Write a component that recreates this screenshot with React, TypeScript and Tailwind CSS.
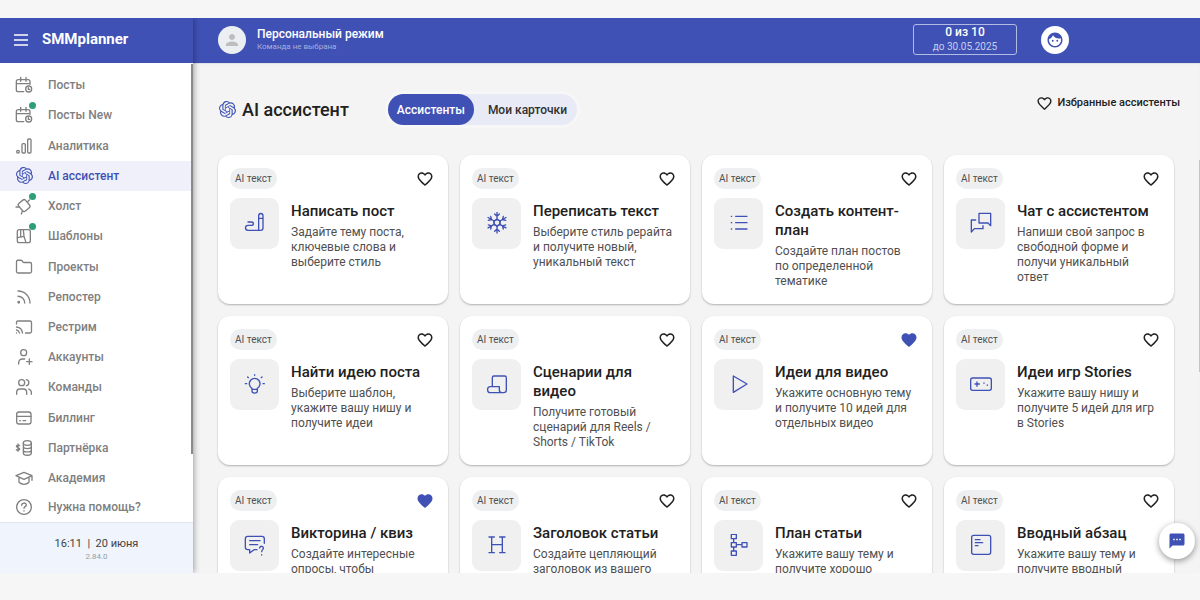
import {useState} from "react";
import type {ReactNode} from "react";
import {Cast, Folder, Rss} from "lucide-react";
import {MdFace, MdFavorite, MdFavoriteBorder, MdPerson, MdTextsms} from "react-icons/md";
import {SiOpenai} from "react-icons/si";

type MenuItem = { label: string, icon: ReactNode, dot?: boolean }
type Assistant = { title: string, text: string, icon: ReactNode }

const calendar = (
    <MenuIcon>
        <path d="M26 47H10a6 6 0 0 1-6-6V17a6 6 0 0 1 6-6h29a6 6 0 0 1 6 6v8M4 23h41M17 4v12M33 4v12"/>
        <circle cx="41" cy="39" r="9"/>
        <path d="M40 35v5h4"/>
    </MenuIcon>
)

const menu: MenuItem[] = [
    {label: "Посты", icon: calendar},
    {label: "Посты New", icon: calendar, dot: true},
    {
        label: "Аналитика",
        icon: <MenuIcon><circle cx="9" cy="44" r="4"/><rect x="21" y="20" width="10" height="28" rx="3"/><rect x="38" y="6" width="10" height="42" rx="3"/></MenuIcon>,
    },
    {label: "AI ассистент", icon: <SiOpenai size={17}/>},
    {
        label: "Холст",
        icon: <MenuIcon><rect x="14" y="11" width="27" height="30" rx="6" transform="rotate(-40 27 26)"/><path d="M38 14l5-5M3 30h9M19 51l3-8"/></MenuIcon>,
        dot: true,
    },
    {
        label: "Шаблоны",
        icon: <MenuIcon><rect x="7" y="8" width="39" height="39" rx="6"/><path d="M25 8l2 20 6 19M7 32l20-4M17 10v20"/></MenuIcon>,
        dot: true,
    },
    {label: "Проекты", icon: <Folder size={18} strokeWidth={1.75}/>},
    {label: "Репостер", icon: <Rss size={18} strokeWidth={1.75}/>},
    {label: "Рестрим", icon: <Cast size={18} strokeWidth={1.75}/>},
    {
        label: "Аккаунты",
        icon: <MenuIcon><circle cx="26" cy="14" r="9"/><path d="M11 48v-4c0-6 5-11 11-11h7M43 33v16M35 41h16"/></MenuIcon>,
    },
    {
        label: "Команды",
        icon: <MenuIcon><circle cx="20" cy="14" r="9"/><path d="M5 49v-6c0-6 4-10 10-10h10c6 0 10 4 10 10v6M34 5c10 2 10 16 0 18M41 33c5 2 8 5 8 10v6"/></MenuIcon>,
    },
    {
        label: "Биллинг",
        icon: <MenuIcon><rect x="5" y="9" width="43" height="36" rx="7"/><path d="M5 22h43M14 35h2M24 35h8"/></MenuIcon>,
    },
    {
        label: "Партнёрка",
        icon: <MenuIcon><ellipse cx="37" cy="12" rx="12" ry="7"/><path d="M25 12v30c0 9 24 9 24 0V12M25 22c0 9 24 9 24 0M25 32c0 9 24 9 24 0M14 20c-3-3-10-2-10 2s10 4 10 8-7 5-10 2M9 15v22"/></MenuIcon>,
    },
]

const extraMenu: MenuItem[] = [
    {
        label: "Академия",
        icon: <MenuIcon><path d="M27 10L3 20l24 11 24-11zM12 25v15c8 8 22 8 30 0V25M51 20v14"/></MenuIcon>,
    },
    {
        label: "Нужна помощь?",
        icon: <MenuIcon><circle cx="27" cy="27" r="22"/><path d="M20 22c0-9 14-9 14-1 0 5-7 5-7 10M27 38v1"/></MenuIcon>,
    },
]

const assistants: Assistant[] = [
    {
        title: "Написать пост",
        text: "Задайте тему поста, ключевые слова и выберите стиль",
        icon: <path d="M15 30h10c8 0 8 10 0 10H15c-10 0-10 15 0 15h38c4 0 7-3 7-7V12c0-10-13-10-13 0v43M47 19h13"/>,
    },
    {
        title: "Переписать текст",
        text: "Выберите стиль рерайта и получите новый, уникальный текст",
        icon: [0, 60, 120, 180, 240, 300].map((angle) => (
            <path key={angle} transform={`rotate(${angle} 36 32)`} d="M36 22V1M27 27l9-5 9 5M29 6l7 7 7-7"/>
        )),
    },
    {
        title: "Создать контент-план",
        text: "Создайте план постов по определенной тематике",
        icon: <path d="M26 13h34M26 32h34M26 51h34M13 13h1M13 32h1M13 51h1"/>,
    },
    {
        title: "Чат с ассистентом",
        text: "Напиши свой запрос в свободной форме и получи уникальный ответ",
        icon: <path d="M30 4h35v37l-8-8H30zM20 24H7v36l9-10h26V41"/>,
    },
    {
        title: "Найти идею поста",
        text: "Выберите шаблон, укажите вашу нишу и получите идеи",
        icon: <path d="M27 46a16 16 0 1 1 16 0v9c0 7-16 7-16 0zM27 49h16M35 5v2M7 32h4M60 32h4M14 12l2 2M57 12l-2 2"/>,
    },
    {
        title: "Сценарии для видео",
        text: "Получите готовый сценарий для Reels / Shorts / TikTok",
        icon: <path d="M22 41V14a5 5 0 0 1 5-5h32a5 5 0 0 1 5 5v37a8 8 0 0 1-8 8H16c-11 0-11-18 0-18h27v10a8 8 0 0 0 8 8"/>,
    },
    {
        title: "Идеи для видео",
        text: "Укажите основную тему и получите 10 идей для отдельных видео",
        icon: <path d="M19 9l41 24-41 25z"/>,
    },
    {
        title: "Идеи игр Stories",
        text: "Укажите вашу нишу и получите 5 идей для игр в Stories",
        icon: <path d="M11 15h50a6 6 0 0 1 6 6v25a6 6 0 0 1-6 6H11a6 6 0 0 1-6-6V21a6 6 0 0 1 6-6zM24 27v13M18 33h13M45 30v1M55 36v1"/>,
    },
    {
        title: "Викторина / квиз",
        text: "Создайте интересные опросы, чтобы заинтересовать аудиторию",
        icon: <path d="M64 28V14a7 7 0 0 0-7-7H14a7 7 0 0 0-7 7v26a7 7 0 0 0 7 7h6v10l13-10h9M20 20h31M20 32h24M50 42c1-8 12-6 11 1 0 4-5 4-5 10M56 62v1"/>,
    },
    {
        title: "Заголовок статьи",
        text: "Создайте цепляющий заголовок из вашего текста",
        icon: <path d="M20 9v47M52 9v47M20 32h32M12 9h16M44 9h16M12 56h16M44 56h16"/>,
    },
    {
        title: "План статьи",
        text: "Укажите вашу тему и получите хорошо структурированный план",
        icon: <path d="M13 1h15v13H13zM13 26h15v13H13zM13 51h15v13H13zM45 26h15v13H45zM20 14v12M20 39v12M28 32h17"/>,
    },
    {
        title: "Вводный абзац",
        text: "Укажите вашу тему и получите вводный параграф",
        icon: <path d="M14 4h45a6 6 0 0 1 6 6v45a6 6 0 0 1-6 6H14a6 6 0 0 1-6-6V10a6 6 0 0 1 6-6zM19 17h14M19 26h22M19 35h8"/>,
    },
]

const tabs: string[] = ["Ассистенты", "Мои карточки"]

function App() {
    const [active, setActive] = useState("AI ассистент")
    const [tab, setTab] = useState(tabs[0])
    const [favorites, setFavorites] = useState(["Идеи для видео", "Викторина / квиз"])

    const toggleFavorite = (title: string) => {
        setFavorites(favorites.includes(title) ? favorites.filter((e) => e !== title) : [...favorites, title])
    }

    return (
        <div className="h-screen pt-[18px] pb-[27px] bg-[#f6f6f6] font-[Roboto,sans-serif] text-[#212121]">
            <div className="relative flex h-full overflow-hidden bg-[#f4f4f4]">
                <aside className="relative z-10 flex flex-col w-[193px] shrink-0 bg-white shadow-[1px_0_6px_rgba(0,0,0,0.35)]">
                    <div className="flex items-center gap-3 h-[45px] pl-3 pb-[2px] shrink-0 bg-[#3f51b5] text-white">
                        <button aria-label="Меню">
                            <svg width="18" height="18" viewBox="0 0 18 18" stroke="currentColor" strokeWidth="1.5"><path d="M2 4h14M2 9h14M2 14h14"/></svg>
                        </button>
                        <span className="text-[15px] font-bold">SMMplanner</span>
                    </div>
                    <nav className="flex flex-col flex-1 pt-[7px]">
                        {menu.map((e) => (
                            <MenuLink key={e.label} item={e} selected={active === e.label} onClick={() => setActive(e.label)}/>
                        ))}
                    </nav>
                    <nav className="flex flex-col h-[59px] shrink-0">
                        {extraMenu.map((e) => (
                            <MenuLink key={e.label} item={e} selected={active === e.label} onClick={() => setActive(e.label)}/>
                        ))}
                    </nav>
                    <div className="flex flex-col items-center h-[51px] pt-[13px] shrink-0 border-t border-[#e4e6ea] bg-[#f0f4fc]">
                        <span className="text-[11px] leading-4 whitespace-pre text-[#424242]">16:11  |  20 июня</span>
                        <span className="text-[8px] leading-[10px] text-[#9a9ca3]">2.84.0</span>
                    </div>
                    <div className="absolute top-[46px] bottom-[119px] right-0 w-[2px] bg-[#8a8a8a]"/>
                </aside>

                <div className="flex flex-col flex-1 min-w-0">
                    <header className="flex items-center h-[45px] pl-[25px] pr-[131px] pb-[2px] shrink-0 bg-[#3f51b5] text-white">
                        <div className="flex justify-center items-center w-7 h-7 rounded-full bg-[#eceff1] text-[#bdbdbd]">
                            <MdPerson size={18}/>
                        </div>
                        <div className="flex flex-col ml-[11px] pb-[2px]">
                            <span className="text-xs leading-4 font-medium">Персональный режим</span>
                            <span className="text-[8px] leading-[10px] text-[#a5afde]">Команда не выбрана</span>
                        </div>
                        <div className="flex flex-col items-center justify-center w-[104px] h-[31px] ml-auto rounded-[3px] border border-[#b3bbe4]">
                            <span className="text-xs leading-[15px] font-medium">0 из 10</span>
                            <span className="text-[10px] leading-[14px] text-[#c9cfee]">до 30.05.2025</span>
                        </div>
                        <button aria-label="Профиль" className="flex justify-center items-center w-7 h-7 ml-6 rounded-full bg-white text-[#3f51b5]">
                            <MdFace size={18}/>
                        </button>
                    </header>

                    <main className="flex-1 min-h-0 overflow-hidden shadow-[inset_0_1px_1px_rgba(0,0,0,0.08)]">
                        <div className="flex items-center pt-[31px] pb-[30px] pl-[26px] pr-5">
                            <SiOpenai size={17} className="text-[#3f51b5]"/>
                            <h1 className="ml-[6px] text-lg leading-6 font-medium">AI ассистент</h1>
                            <div className="flex ml-[39px] rounded-full bg-[#e8eaf6] shadow-[0_0_0_3px_#f7f7f7]">
                                {tabs.map((e) => (
                                    <TabButton key={e} label={e} selected={tab === e} onClick={() => setTab(e)}/>
                                ))}
                            </div>
                            <a href="#favorites" className="flex items-center self-start gap-1 ml-auto text-[11px] leading-[18px] font-medium">
                                <MdFavoriteBorder size={17}/>
                                Избранные ассистенты
                            </a>
                        </div>
                        <div className="grid grid-cols-[repeat(auto-fill,minmax(220px,1fr))] gap-3 pl-[25px] pr-[26px]">
                            {assistants.map((e) => (
                                <AssistantCard key={e.title} assistant={e} favorite={favorites.includes(e.title)} onToggle={() => toggleFavorite(e.title)}/>
                            ))}
                        </div>
                    </main>
                </div>

                <div className="absolute top-[142px] right-0 w-px h-[212px] bg-[#c4c4c4]"/>
                <button aria-label="Чат поддержки" className="absolute right-[5px] bottom-[14px] z-20 flex justify-center items-center w-9 h-9 rounded-full bg-white text-[#3f51b5] shadow-[0_2px_6px_rgba(0,0,0,0.4)]">
                    <MdTextsms size={18}/>
                </button>
            </div>
        </div>
    )
}

function MenuIcon({children}: {children: ReactNode}) {
    return (
        <svg width="18" height="18" viewBox="0 0 54 54" fill="none" stroke="currentColor" strokeWidth="4" strokeLinecap="round" strokeLinejoin="round">{children}</svg>
    );
}

function MenuLink({item, selected, onClick}: {item: MenuItem, selected: boolean, onClick: () => void}) {
    return (
        <a href="#menu" onClick={onClick} className={`flex flex-1 items-center gap-[15px] pl-[15px] text-xs font-medium ${selected ? "bg-[#eff0f9] text-[#3f51b5]" : "text-[#808080]"}`}>
            <span className="relative flex justify-center w-[18px]">
                {item.icon}
                {item.dot && <span className="absolute -top-1 -right-[3px] w-[7px] h-[7px] rounded-full bg-[#2e9e78]"/>}
            </span>
            {item.label}
        </a>
    );
}

function TabButton({label, selected, onClick}: {label: string, selected: boolean, onClick: () => void}) {
    return (
        <button onClick={onClick} className={`h-[31px] rounded-full text-xs font-medium ${selected ? "px-[9px] bg-[#3f51b5] text-white" : "pl-[14px] pr-[10px] text-[#303030]"}`}>{label}</button>
    );
}

function AssistantCard({assistant, favorite, onToggle}: {assistant: Assistant, favorite: boolean, onToggle: () => void}) {
    return (
        <article className="min-h-[149px] px-3 pt-[13px] pb-3 rounded-xl bg-white shadow-[0_1px_2px_rgba(0,0,0,0.28)]">
            <div className="flex justify-between items-center">
                <span className="px-[5px] rounded-full bg-[#eeeff0] text-[10px] leading-[21px] text-[#505050]">AI текст</span>
                <button aria-label="В избранное" onClick={onToggle} className={`mr-[2px] ${favorite ? "text-[#3f51b5]" : "text-[#212121]"}`}>
                    {favorite ? <MdFavorite size={18}/> : <MdFavoriteBorder size={18}/>}
                </button>
            </div>
            <div className="flex gap-3 mt-[9px]">
                <div className="flex justify-center items-center w-[49px] h-[51px] shrink-0 rounded-[9px] bg-[#f0f0f0] text-[#3f51b5]">
                    <svg width="24" height="24" viewBox="0 0 72 72" fill="none" stroke="currentColor" strokeWidth="4" strokeLinecap="round" strokeLinejoin="round">{assistant.icon}</svg>
                </div>
                <div className="pt-1 pr-1">
                    <h2 className="text-[15px] leading-[19px] font-medium">{assistant.title}</h2>
                    <p className="mt-1 text-xs leading-[15px] text-[#505050]">{assistant.text}</p>
                </div>
            </div>
        </article>
    );
}

export default App
